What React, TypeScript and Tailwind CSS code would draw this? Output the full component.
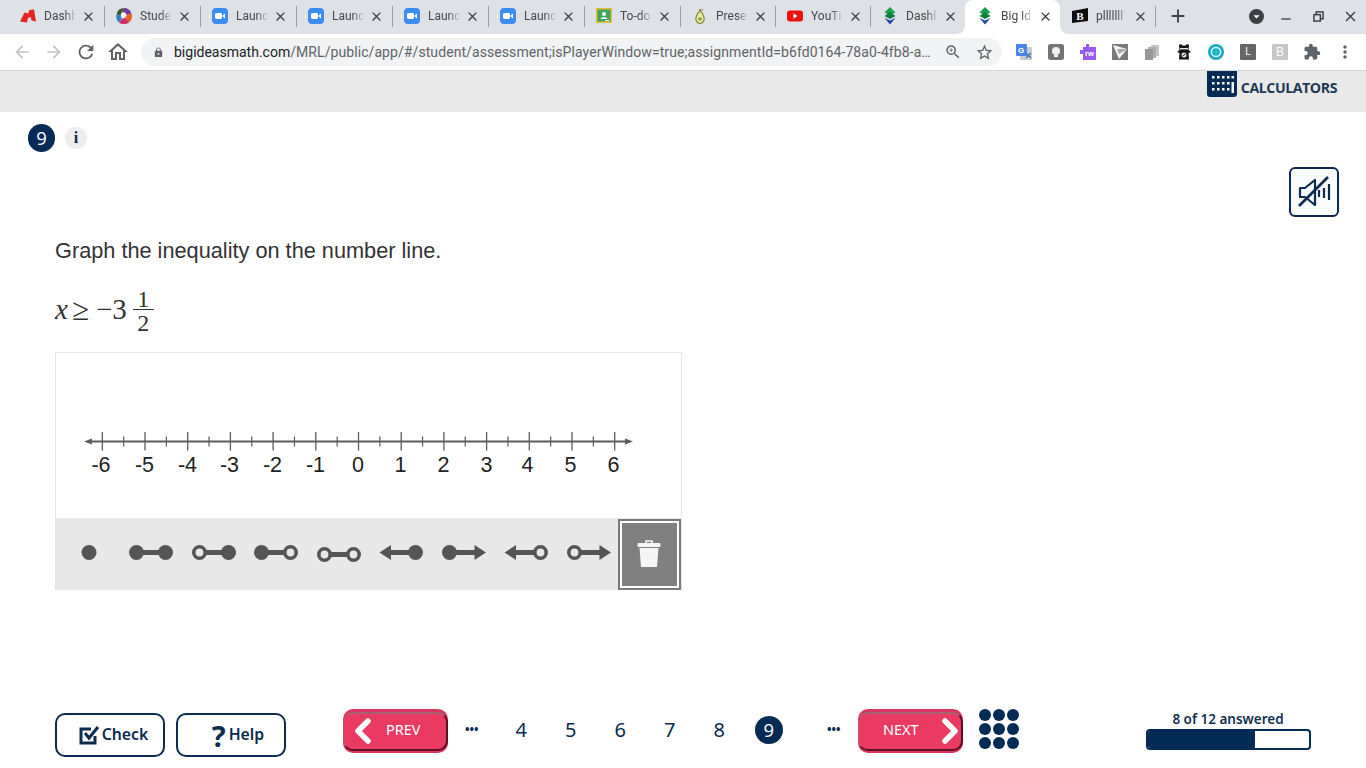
import React from "react";
import { MdArrowBack, MdArrowForward, MdRefresh, MdOutlineHome, MdLock, MdStarBorder, MdZoomIn, MdMoreVert, MdClose, MdExtension, MdAdd, MdRemove, MdArrowDropDown } from "react-icons/md";

const NAVY = "#042a56";

function Fav({ kind }: { kind: string }) {
  if (kind === "a")
    return (
      <svg viewBox="0 0 16 16" className="w-4 h-4">
        <path d="M0 13.5 L4.5 4.5 L8 5.5 L9.5 2 L14 1.5 L16 13.5 L11.5 12.5 L10.5 9 L8 10 L7 14.5 Z" fill="#e5251f" />
      </svg>
    );
  if (kind === "s")
    return (
      <svg viewBox="0 0 16 16" className="w-4 h-4">
        <circle cx="8" cy="8" r="8" fill="#fff" />
        <path d="M8 0 A8 8 0 0 1 15.5 5.5 L10.5 7 A3 3 0 0 0 5.5 5 Z" fill="#6f3a9c" />
        <path d="M15.5 5.5 A8 8 0 0 1 13.5 14 L9 9.5 A2.5 2.5 0 0 0 10.5 7 Z" fill="#e8601f" />
        <path d="M13.5 14 A8 8 0 0 1 3 14.5 L6 10.5 A3 3 0 0 0 9 9.5 Z" fill="#cf2f62" />
        <path d="M3 14.5 A8 8 0 0 1 0.5 6 L5 8 A3 3 0 0 0 6 10.5 Z" fill="#2f7fc4" />
        <path d="M0.5 6 A8 8 0 0 1 8 0 L5.5 5 A3 3 0 0 0 5 8 Z" fill="#3c5a2f" />
      </svg>
    );
  if (kind === "z")
    return (
      <svg viewBox="0 0 16 16" className="w-4 h-4">
        <rect width="16" height="16" rx="4" fill="#3d8bf2" />
        <rect x="3" y="5" width="7" height="6" rx="1.4" fill="#fff" />
        <path d="M10.6 7.4 L13 5.6 V10.4 L10.6 8.6 Z" fill="#fff" />
      </svg>
    );
  if (kind === "c")
    return (
      <svg viewBox="0 0 16 16" className="w-4 h-4">
        <rect width="16" height="15" fill="#e3bd36" />
        <rect x="1.5" y="1.5" width="13" height="12" fill="#3ea55f" />
        <circle cx="8" cy="6" r="2" fill="#fff" />
        <path d="M4.5 11 C4.5 8.5 11.5 8.5 11.5 11 Z" fill="#fff" />
        <rect x="9" y="12" width="4" height="1.2" fill="#fff" />
      </svg>
    );
  if (kind === "p")
    return (
      <svg viewBox="0 0 16 16" className="w-4 h-4">
        <path d="M8 1 V4" stroke="#6b5a2a" strokeWidth="1.2" />
        <path d="M8 2.5 C9 1 10.5 1 11.5 1.5 C10.5 3 9 3 8 2.5Z" fill="#8ba12f" />
        <path d="M8 3.5 C10 3.5 10.5 6 11.5 8 C13 11.5 11.5 15.5 8 15.5 C4.5 15.5 3 11.5 4.5 8 C5.5 6 6 3.5 8 3.5 Z" fill="#e9e9a6" stroke="#7d8a35" strokeWidth="1.2" />
        <circle cx="8" cy="11" r="1.8" fill="#8c9a3c" />
      </svg>
    );
  if (kind === "y")
    return (
      <svg viewBox="0 0 16 16" className="w-4 h-4">
        <rect y="2.5" width="16" height="11" rx="3" fill="#ee0f0f" />
        <path d="M6.4 5.4 L10.8 8 L6.4 10.6 Z" fill="#fff" />
      </svg>
    );
  if (kind === "b")
    return (
      <svg viewBox="0 0 16 16" className="w-4 h-4 overflow-visible">
        <path d="M8 -1 L13.5 4.5 L8 7 L2.5 4.5 Z" fill="#17a04f" />
        <path d="M8 4 L13.5 8 L8 11 L2.5 8 Z" fill="#0f7f3c" />
        <path d="M2.5 10 L8 12.5 L13.5 10 L8 16.5 Z" fill="#1c46a8" />
      </svg>
    );
  return (
    <svg viewBox="0 0 16 16" className="w-4 h-4">
      <path d="M0 3 L16 0 V13 L0 15 Z" fill="#0b0b0b" />
      <text x="8" y="12" fontSize="11" fontWeight="900" fill="#fff" textAnchor="middle" fontFamily="'Liberation Serif', serif">B</text>
    </svg>
  );
}

const tabs = [
  { k: "a", t: "Dashb", w: 96 },
  { k: "s", t: "Stude", w: 96 },
  { k: "z", t: "Launc", w: 96 },
  { k: "z", t: "Launc", w: 96 },
  { k: "z", t: "Launc", w: 96 },
  { k: "z", t: "Launc", w: 96 },
  { k: "c", t: "To-do", w: 96 },
  { k: "p", t: "Prese", w: 95 },
  { k: "y", t: "YouTi", w: 95 },
  { k: "b", t: "Dashl", w: 95, noSep: true },
  { k: "b", t: "Big Id", w: 95, active: true, noSep: true },
  { k: "n", t: "plllllll", w: 95 },
];

function Tab({ k, t, w, active, noSep }: { k: string; t: string; w: number; active?: boolean; noSep?: boolean }) {
  return (
    <div
      style={{ width: w }}
      className={"relative flex items-center h-full pl-3 pb-[2px] shrink-0 " + (active ? "bg-white rounded-t-lg" : "")}
    >
      {active && (
        <>
          <span className="absolute left-[-8px] bottom-0 w-2 h-2 bg-[radial-gradient(circle_at_0_0,#dee1e6_7.5px,#ffffff_8px)]" />
          <span className="absolute right-[-8px] bottom-0 w-2 h-2 bg-[radial-gradient(circle_at_100%_0,#dee1e6_7.5px,#ffffff_8px)]" />
        </>
      )}
      <Fav kind={k} />
      <span className="ml-2 w-[34px] overflow-hidden whitespace-nowrap text-[12px] text-[#44474b] font-['Roboto',sans-serif] [mask-image:linear-gradient(to_right,#000_60%,transparent_95%)]">
        {t}
      </span>
      <MdClose className="w-[15px] h-[15px] ml-[3px] text-[#3c4043]" />
      {!active && !noSep && <span className="absolute right-[-1px] top-[6px] w-px h-[21px] bg-[#9aa0a6]" />}
    </div>
  );
}

function ExtIcon({ i }: { i: number }) {
  if (i === 0)
    return (
      <svg viewBox="0 0 16 16" className="w-4 h-4">
        <rect x="4" y="3" width="12" height="13" fill="#c9ccd1" />
        <rect width="11" height="12" rx="1" fill="#4a86e8" />
        <text x="5.2" y="9" fontSize="8" fontWeight="700" fill="#fff" textAnchor="middle" fontFamily="'Liberation Sans', sans-serif">G</text>
        <path d="M10 9 L15 14 M15 9 L10 14" stroke="#3d6fb4" strokeWidth="1.2" />
      </svg>
    );
  if (i === 1)
    return (
      <svg viewBox="0 0 16 16" className="w-4 h-4">
        <rect width="16" height="16" rx="2.5" fill="#757575" />
        <circle cx="8" cy="7" r="4" fill="#f1f1f1" />
        <rect x="6" y="11" width="4" height="2" fill="#f1f1f1" />
      </svg>
    );
  if (i === 2)
    return (
      <svg viewBox="0 0 16 16" className="w-4 h-4">
        <path d="M0 6 H3 V3 H6 V0 H9 V3 H16 V16 H3 V10 H0 Z" fill="#9a5cf0" />
        <text x="9.5" y="12" fontSize="7.5" fontWeight="700" fill="#fff" textAnchor="middle" fontFamily="'Liberation Sans', sans-serif">rw</text>
      </svg>
    );
  if (i === 3)
    return (
      <svg viewBox="0 0 16 16" className="w-4 h-4">
        <rect width="16" height="16" fill="#7a7a7a" />
        <path d="M1 1 L15 5 L7 15 Z" fill="#f5f5f5" />
        <path d="M5 5 L15 5 L7 10 Z" fill="#a8a8a8" />
      </svg>
    );
  if (i === 4)
    return (
      <svg viewBox="0 0 16 16" className="w-4 h-4">
        <rect x="7" y="1" width="8" height="11" fill="#c4c4c4" />
        <rect x="4" y="3" width="8" height="11" fill="#aeaeae" />
        <rect x="1" y="5" width="8" height="11" fill="#989898" />
      </svg>
    );
  if (i === 5)
    return (
      <svg viewBox="0 0 16 16" className="w-4 h-4">
        <path d="M3 1 L5 0 L6.5 1.5 H9.5 L11 0 L13 1 L12.5 6 L15 8 L12.5 9 L13 15.5 L3 15.5 L3.5 9 L1 8 L3.5 6 Z" fill="#151515" />
        <rect x="4" y="4" width="8" height="1.4" fill="#dcdcdc" />
        <circle cx="8" cy="11" r="2.5" fill="#e5e5e5" />
        <path d="M6.5 12 L9.5 10" stroke="#151515" strokeWidth="1" />
      </svg>
    );
  if (i === 6)
    return (
      <svg viewBox="0 0 16 16" className="w-4 h-4">
        <circle cx="8" cy="8" r="8" fill="#17a9c4" />
        <circle cx="8" cy="8" r="4.6" fill="none" stroke="#d8f4f8" strokeWidth="1.6" />
        <circle cx="8" cy="8" r="2.4" fill="#1fc0d8" />
      </svg>
    );
  if (i === 7)
    return (
      <div className="w-4 h-4 bg-[#666] flex items-center justify-center rounded-[1px] text-white text-[10px] leading-none font-['Liberation_Sans',sans-serif]">L</div>
    );
  if (i === 8)
    return (
      <div className="w-4 h-4 bg-[#c6c6c6] flex items-center justify-center rounded-[1px] text-white text-[12px] leading-none font-['Liberation_Sans',sans-serif]">B</div>
    );
  return <MdExtension className="w-[18px] h-[18px] text-[#5f6368]" />;
}

function Tool({ d, cy = 13.5, left, right }: { d: "dot" | "seg" | "arrowL" | "arrowR"; cy?: number; left?: boolean; right?: boolean }) {
  const c = "#555555";
  const Dot = ({ x, open }: { x: number; open?: boolean }) =>
    open ? (
      <circle cx={x} cy={cy} r={5.7} fill="#e8e8e8" stroke={c} strokeWidth={3.6} />
    ) : (
      <circle cx={x} cy={cy} r={7.5} fill={c} />
    );
  return (
    <button className="w-[62.5px] h-[30px] shrink-0 flex justify-center">
      <svg viewBox="0 0 50 30" className="w-[50px] h-[30px]">
        {d === "dot" && <Dot x={25} />}
        {d === "seg" && (
          <>
            <rect x={10} y={cy - 2.5} width={30} height={5} fill={c} />
            <Dot x={10.5} open={left} />
            <Dot x={39.5} open={right} />
          </>
        )}
        {d === "arrowL" && (
          <>
            <rect x={13} y={cy - 2.5} width={26} height={5} fill={c} />
            <path d={`M3.5 ${cy} L15 ${cy - 7.5} V${cy + 7.5} Z`} fill={c} />
            <Dot x={39.5} open={right} />
          </>
        )}
        {d === "arrowR" && (
          <>
            <rect x={11} y={cy - 2.5} width={26} height={5} fill={c} />
            <path d={`M47 ${cy} L35.5 ${cy - 7.5} V${cy + 7.5} Z`} fill={c} />
            <Dot x={10.5} open={left} />
          </>
        )}
      </svg>
    </button>
  );
}

function NumberLine() {
  const X = (n: number) => 46.3 + 42.7 * (n + 6);
  const labelX = [45, 88.5, 131.5, 173.5, 216.5, 259.5, 302, 344.5, 387.5, 430.5, 471.5, 514.5, 557.5];
  const nums = [-6, -5, -4, -3, -2, -1, 0, 1, 2, 3, 4, 5, 6];
  const c = "#5c5c5c";
  return (
    <svg viewBox="0 0 625 165" className="w-[625px] h-[165px] block">
      <line x1={34} x2={570} y1={88.5} y2={88.5} stroke={c} strokeWidth={1.8} />
      <path d="M28 88.5 L36 85.5 V91.5 Z" fill={c} />
      <path d="M577 88.5 L569 85.5 V91.5 Z" fill={c} />
      {nums.map((n) => (
        <line key={n} x1={X(n)} x2={X(n)} y1={79} y2={97.5} stroke={c} strokeWidth={1.3} />
      ))}
      {nums.slice(0, 12).map((n) => (
        <line key={n} x1={X(n) + 21.35} x2={X(n) + 21.35} y1={83.5} y2={93.5} stroke={c} strokeWidth={1.2} />
      ))}
      {nums.map((n, i) => (
        <text key={n} x={labelX[i]} y={118.5} fontSize={21.5} textAnchor="middle" fill="#222" fontFamily="'Liberation Sans', sans-serif">
          {n}
        </text>
      ))}
    </svg>
  );
}

function Chevron({ dir }: { dir: "l" | "r" }) {
  return (
    <svg viewBox="0 0 18 26" className="w-[18px] h-[26px]">
      <polyline
        points={dir === "l" ? "14,3 4,13 14,23" : "4,3 14,13 4,23"}
        fill="none"
        stroke="#ffffff"
        strokeWidth={5.5}
        strokeLinecap="round"
        strokeLinejoin="round"
      />
    </svg>
  );
}

function PinkButton({ dir, label }: { dir: "l" | "r"; label: string }) {
  return (
    <button className="h-[44px] rounded-[10px] bg-[#d9375f] mt-[3px] shrink-0 w-[104.5px] block">
      <div className="h-[39px] rounded-[10px] bg-[#ea3a62] border-t-2 border-l border-r-2 border-b-2 border-t-[#a8616f] border-l-[#b5566c] border-r-[#5d0f24] border-b-[#5d0f24] flex items-center justify-between text-white text-[14.5px] font-['Noto_Sans',sans-serif]">
        {dir === "l" ? (
          <>
            <span className="ml-[10px] -mt-[1px]"><Chevron dir="l" /></span>
            <span className="mr-[25px] -mt-[3px]">{label}</span>
          </>
        ) : (
          <>
            <span className="ml-[24px] -mt-[3px]">{label}</span>
            <span className="mr-[2px] -mt-[1px]"><Chevron dir="r" /></span>
          </>
        )}
      </div>
    </button>
  );
}

export default function App() {
  return (
    <div className="w-[1366px] h-[768px] overflow-hidden bg-white flex flex-col font-['Liberation_Sans',sans-serif]">
      {/* tab strip */}
      <div className="h-[34px] shrink-0 bg-[#dee1e6] flex items-stretch pl-2">
        {tabs.map((t, i) => (
          <Tab key={i} {...t} />
        ))}
        <div className="w-[46px] flex items-center justify-center shrink-0 pb-[2px]">
          <MdAdd className="w-[22px] h-[22px] text-[#3c4043]" />
        </div>
        <div className="flex-1" />
        <div className="flex items-center pr-[7.5px] pb-[2px]">
          <div className="w-[15px] h-[15px] rounded-full bg-[#3c4043] flex items-center justify-center mr-[14.5px]">
            <MdArrowDropDown className="w-[15px] h-[15px] text-white" />
          </div>
          <MdRemove className="w-[16px] h-[16px] text-[#3c4043] mr-[18.5px] mt-[6px]" />
          <svg viewBox="0 0 12 12" className="w-[11px] h-[11px] mr-[18px]">
            <rect x="3.5" y="1" width="7.5" height="7.5" fill="none" stroke="#3c4043" strokeWidth="1.6" />
            <rect x="1" y="4" width="7" height="7" fill="#dee1e6" stroke="#3c4043" strokeWidth="1.6" />
          </svg>
          <MdClose className="w-[17px] h-[17px] text-[#3c4043]" />
        </div>
      </div>

      {/* toolbar */}
      <div className="h-[37px] shrink-0 bg-white border-b border-[#d6d7d9] flex items-center pl-[6px]">
        <span className="w-8 flex justify-center"><MdArrowBack className="w-5 h-5 text-[#c1c4c9]" /></span>
        <span className="w-8 flex justify-center"><MdArrowForward className="w-5 h-5 text-[#c1c4c9]" /></span>
        <span className="w-8 flex justify-center"><MdRefresh className="w-[22px] h-[22px] text-[#5f6368]" /></span>
        <span className="w-8 flex justify-center"><MdOutlineHome className="w-6 h-6 text-[#5f6368]" /></span>
        <div className="ml-[7px] w-[861px] h-[28px] rounded-full bg-[#f1f3f4] flex items-center pl-[12px] shrink-0">
          <MdLock className="w-[11px] h-[11px] text-[#5f6368] mr-[10px]" />
          <span className="text-[14px] whitespace-nowrap font-['Roboto',sans-serif] text-[#5f6368] w-[757px] tracking-[0.08px]">
            <span className="text-[#202124] tracking-normal">bigideasmath.com</span>/MRL/public/app/#/student/assessment;isPlayerWindow=true;assignmentId=b6fd0164-78a0-4fb8-a…
          </span>
          <MdZoomIn className="w-[18px] h-[18px] text-[#5f6368] ml-[13px]" />
          <MdStarBorder className="w-[19px] h-[19px] text-[#5f6368] ml-[13px]" />
        </div>
        <div className="flex items-center ml-[6px]">
          {[0, 1, 2, 3, 4, 5, 6, 7, 8, 9].map((i) => (
            <div key={i} className="w-8 flex items-center justify-center">
              <ExtIcon i={i} />
            </div>
          ))}
          <MdMoreVert className="w-5 h-5 text-[#5f6368] ml-[7px]" />
        </div>
      </div>

      {/* gray header */}
      <div className="h-[41px] shrink-0 bg-[#e9e9e9] flex justify-end items-start pr-[29px] overflow-hidden">
        <svg viewBox="0 0 30 26" className="w-[30px] h-[26px] mr-1">
          <path d="M0 0 H30 V23 A3 3 0 0 1 27 26 H3 A3 3 0 0 1 0 23 Z" fill={NAVY} />
          {[5, 11, 17].map((y) =>
            [5, 10, 15, 20].map((x) => <rect key={x + "-" + y} x={x} y={y} width={2.5} height={2.5} fill="#fff" />)
          )}
          <rect x="24.5" y="5" width="2.5" height="2.5" fill="#fff" />
          <rect x="24.5" y="11" width="2.5" height="11" fill="#fff" />
        </svg>
        <span className="text-[14.2px] font-bold text-[#1f3a57] mt-[7px] leading-[20px] font-['Open_Sans',sans-serif] tracking-[-0.45px]">CALCULATORS</span>
      </div>

      {/* main */}
      <div className="flex-1 flex flex-col min-h-0">
        <div className="flex items-center pl-[28px] pt-[12px]">
          <div className="w-[27px] h-[28px] rounded-full flex items-center justify-center text-white text-[18.5px] leading-none font-['Open_Sans',sans-serif]" style={{ backgroundColor: NAVY }}>
            9
          </div>
          <div className="ml-[10px] w-[22px] h-[22px] rounded-full bg-[#eeeeee] flex items-center justify-center text-[#0e2a47] text-[16px] font-bold leading-none font-['Liberation_Serif',serif]">
            i
          </div>
        </div>

        <div className="flex justify-end pr-[27px] mt-[15px]">
          <div className="w-[50px] h-[50px] rounded-[6px] border-2 border-[#0b2b4f] bg-[#fafcfd] flex items-center justify-center">
            <svg viewBox="0 0 34 34" className="w-[34px] h-[34px]">
              <path d="M3 13 H8 L18 5 V30 L8 22 H3 Z" fill="none" stroke="#0b2b4f" strokeWidth="2.2" strokeLinejoin="round" />
              <path d="M22 15 V22 M27 13 V23 M32 9 V25" stroke="#0b2b4f" strokeWidth="2.2" />
              <path d="M2 31 L31 2" stroke="#0b2b4f" strokeWidth="2.6" />
            </svg>
          </div>
        </div>

        <div className="pl-[55px]">
          <p className="mt-[20px] text-[21.72px] leading-[28px] text-[#333333]">Graph the inequality on the number line.</p>
          <div className="mt-[22px] h-[48px] flex items-center font-['Liberation_Serif',serif] text-[#333333] text-[29px] leading-none">
            <span className="italic -mt-[3px]">x</span>
            <span className="ml-[4px] -mt-[3px] text-[31px]">≥</span>
            <span className="ml-[7px] -mt-[3px]">−3</span>
            <span className="ml-[6px] flex flex-col items-center w-[21px] text-[24px] leading-[20.5px]">
              <span>1</span>
              <span className="w-full h-px bg-[#333333]" />
              <span className="mt-[3px]">2</span>
            </span>
          </div>

          <div className="mt-[17px] w-[627px] border-x border-t border-[#e6e6e6] bg-white">
            <NumberLine />
            <div className="h-[72px] bg-[#e8e8e8] flex items-center pl-[1.5px]">
              <Tool d="dot" />
              <Tool d="seg" />
              <Tool d="seg" left />
              <Tool d="seg" right />
              <Tool d="seg" left right cy={15.5} />
              <Tool d="arrowL" />
              <Tool d="arrowR" />
              <Tool d="arrowL" right />
              <Tool d="arrowR" left />
              <div className="w-[63px] h-[71px] shrink-0 border-2 border-[#7a7a7a] bg-white p-[2px] -ml-[2.5px]">
                <div className="w-full h-full bg-[#808080] flex items-center justify-center">
                  <svg viewBox="0 0 24 28" className="w-[24px] h-[28px]">
                    <path d="M9 3 V1 H15 V3" fill="none" stroke="#f5f5f5" strokeWidth="1.6" />
                    <rect x="0.5" y="3" width="23" height="4" rx="1" fill="#f5f5f5" />
                    <path d="M2.5 8 H21.5 L20 27 H4 Z" fill="#f5f5f5" />
                  </svg>
                </div>
              </div>
            </div>
          </div>
        </div>

        {/* bottom bar */}
        <div className="mt-auto h-[62px] shrink-0 flex items-start pl-[55px] font-['Noto_Sans',sans-serif]">
          <button className="w-[110px] h-[44px] mt-[7px] rounded-[10px] border-2 border-[#0b2b4f] flex items-center justify-center text-[#0b2b4f] text-[15.8px] font-semibold pl-[6px]">
            <svg viewBox="0 0 22 22" className="w-[22px] h-[22px]">
              <path d="M17 12 V19 H3 V5 H13" fill="none" stroke="#0b2b4f" strokeWidth="3" />
              <path d="M7 9 L11 14 L20 3" fill="none" stroke="#0b2b4f" strokeWidth="3" />
            </svg>
            <span className="ml-[2px]">Check</span>
          </button>
          <button className="w-[110px] h-[44px] mt-[7px] ml-[11px] rounded-[10px] border-2 border-[#0b2b4f] flex items-center justify-center text-[#0b2b4f] text-[15.8px] font-semibold pl-[14px]">
            <span className="text-[29px] font-bold leading-none mr-[3px]">?</span>
            <span>Help</span>
          </button>
          <div className="ml-[57px]">
            <PinkButton dir="l" label="PREV" />
          </div>
          <div className="flex items-center h-[42px] text-[#0b2b4f] text-[20px] -ml-[0.5px] mt-[3px]">
            <span className="w-[49.5px] text-center font-bold text-[12px]">•••</span>
            {["4", "5", "6", "7", "8"].map((n) => (
              <span key={n} className="w-[49.5px] text-center">{n}</span>
            ))}
            <span className="w-[49.5px] flex justify-center">
              <span className="w-[28px] h-[28px] rounded-full text-white flex items-center justify-center text-[18.5px] leading-none font-['Open_Sans',sans-serif]" style={{ backgroundColor: NAVY }}>9</span>
            </span>
            <span className="w-[64.5px] text-center font-bold text-[12px] pl-[16px]">•••</span>
          </div>
          <div>
            <PinkButton dir="r" label="NEXT" />
          </div>
          <div className="ml-[16px] mt-[3px] grid grid-cols-3 gap-x-[2px] gap-y-[2px] w-[40px]">
            {[...Array(9)].map((_, i) => (
              <span key={i} className="w-3 h-3 rounded-full" style={{ backgroundColor: NAVY }} />
            ))}
          </div>
          <div className="ml-[127px] w-[165px] mt-[4px] flex flex-col items-center">
            <span className="text-[13.5px] font-semibold text-[#12304f] leading-[19px]">8 of 12 answered</span>
            <div className="w-full h-[21px] rounded-[4px] border-2 border-[#042a56] bg-white overflow-hidden">
              <div className="h-full w-[66.5%] bg-[#042a56]" />
            </div>
          </div>
        </div>
      </div>
    </div>
  );
}
